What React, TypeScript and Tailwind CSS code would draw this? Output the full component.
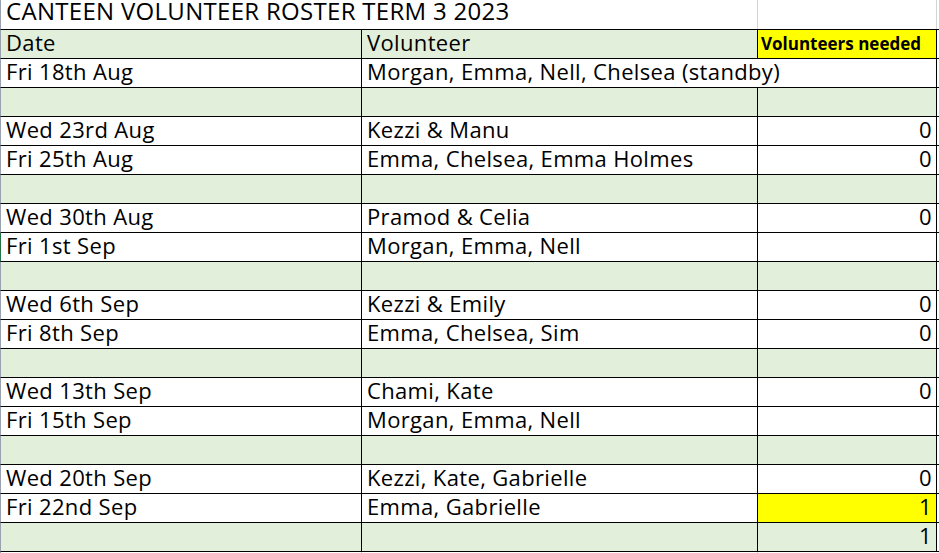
import React from 'react';

type Row = {
    date: string;
    who: string;
    need?: string;
    kind: 'data' | 'blank';
    yellow?: boolean;
    overflow?: boolean;
    mark?: boolean;
};

const rows: Row[] = [
    { date: 'Fri 18th Aug', who: 'Morgan, Emma, Nell, Chelsea (standby)', kind: 'data', overflow: true },
    { date: '', who: '', kind: 'blank' },
    { date: 'Wed 23rd Aug', who: 'Kezzi & Manu', need: '0', kind: 'data' },
    { date: 'Fri 25th Aug', who: 'Emma, Chelsea, Emma Holmes', need: '0', kind: 'data' },
    { date: '', who: '', kind: 'blank' },
    { date: 'Wed 30th Aug', who: 'Pramod & Celia', need: '0', kind: 'data' },
    { date: 'Fri 1st Sep', who: 'Morgan, Emma, Nell', kind: 'data', mark: true },
    { date: '', who: '', kind: 'blank' },
    { date: 'Wed 6th Sep', who: 'Kezzi & Emily', need: '0', kind: 'data' },
    { date: 'Fri 8th Sep', who: 'Emma, Chelsea, Sim', need: '0', kind: 'data' },
    { date: '', who: '', kind: 'blank' },
    { date: 'Wed 13th Sep', who: 'Chami, Kate', need: '0', kind: 'data' },
    { date: 'Fri 15th Sep', who: 'Morgan, Emma, Nell', kind: 'data' },
    { date: '', who: '', kind: 'blank' },
    { date: 'Wed 20th Sep', who: 'Kezzi, Kate, Gabrielle', need: '0', kind: 'data' },
    { date: 'Fri 22nd Sep', who: 'Emma, Gabrielle', need: '1', kind: 'data', yellow: true },
    { date: '', who: '', need: '1', kind: 'blank' },
];

// excel cells sit text on the bottom edge
const cell = 'h-full flex items-end pb-[5px] text-[22px] tracking-[0.35px] leading-none whitespace-nowrap';

export default function App() {
    return (
        <div className="w-[939px] h-[553px] bg-white overflow-hidden text-black" style={{ fontFamily: '"Open Sans", sans-serif' }}>
            {/* title row */}
            <div className="flex h-[30px] border-b border-black border-l border-l-gray-400">
                <div className="w-[756px] h-full flex items-start pl-[5px] text-[24px] tracking-[0.3px] leading-[0.9] whitespace-nowrap">
                    CANTEEN VOLUNTEER ROSTER TERM 3 2023
                </div>
                <div className="w-[180px] h-full border-l border-r border-[#d4d4d4]" />
            </div>

            {/* header */}
            <div className="flex h-[29px] border-b border-black border-l border-l-gray-400">
                <div className={`w-[361px] bg-[#e2efda] border-r border-black pl-[5px] ${cell}`}>Date</div>
                <div className={`w-[396px] bg-[#e2efda] border-r border-black pl-[5px] ${cell}`}>Volunteer</div>
                <div className="w-[179px] h-full bg-[#ffff00] border-r border-black flex items-end pl-[3px] pb-[6px] text-[17px] font-bold leading-none whitespace-nowrap">
                    Volunteers needed
                </div>
            </div>

            {rows.map((r, i) => {
                const bg = r.kind === 'blank' ? 'bg-[#e2efda]' : 'bg-white';
                return (
                    <div
                        key={i}
                        className={`flex h-[29px] border-b border-black border-l ${r.mark ? 'border-l-[#217346]' : 'border-l-gray-400'}`}
                    >
                        <div className={`w-[361px] ${bg} border-r border-black pl-[5px] ${cell}`}>{r.date}</div>
                        {r.overflow ? (
                            <div className={`w-[575px] ${bg} border-r border-black pl-[5px] ${cell}`}>{r.who}</div>
                        ) : (
                            <>
                                <div className={`w-[396px] ${bg} border-r border-black pl-[5px] ${cell}`}>{r.who}</div>
                                <div className={`w-[179px] ${r.yellow ? 'bg-[#ffff00]' : bg} border-r border-black justify-end pr-[4px] ${cell}`}>
                                    {r.need}
                                </div>
                            </>
                        )}
                    </div>
                );
            })}

            <div className="flex h-[2px] border-l border-l-gray-400">
                <div className="w-[361px] border-r border-[#d4d4d4]" />
                <div className="w-[396px] border-r border-[#d4d4d4]" />
            </div>
        </div>
    );
}
